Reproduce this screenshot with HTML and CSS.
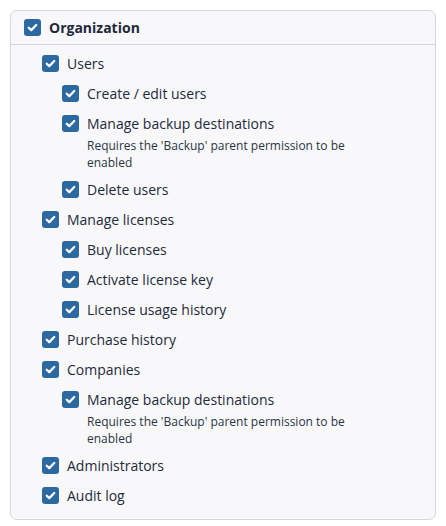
FILE: index.html
```html
<!DOCTYPE html>
<html>
<head>
<meta charset="utf-8">
<link rel="stylesheet" href="styles.css">
</head>
<body>
<div class="panel">
  <div class="header">
    <span class="cb"><svg viewBox="0 0 16 16"><path d="M4 8.2l2.7 2.6L12 5.4"/></svg></span>
    <span class="title">Organization</span>
  </div>
  <div class="list">
    <div class="row l1"><span class="cb"><svg viewBox="0 0 16 16"><path d="M4 8.2l2.7 2.6L12 5.4"/></svg></span><span>Users</span></div>
    <div class="row l2"><span class="cb"><svg viewBox="0 0 16 16"><path d="M4 8.2l2.7 2.6L12 5.4"/></svg></span><span>Create / edit users</span></div>
    <div class="row l2"><span class="cb"><svg viewBox="0 0 16 16"><path d="M4 8.2l2.7 2.6L12 5.4"/></svg></span><span>Manage backup destinations</span></div>
    <div class="note">Requires the 'Backup' parent permission to be enabled</div>
    <div class="row l2"><span class="cb"><svg viewBox="0 0 16 16"><path d="M4 8.2l2.7 2.6L12 5.4"/></svg></span><span>Delete users</span></div>
    <div class="row l1"><span class="cb"><svg viewBox="0 0 16 16"><path d="M4 8.2l2.7 2.6L12 5.4"/></svg></span><span>Manage licenses</span></div>
    <div class="row l2"><span class="cb"><svg viewBox="0 0 16 16"><path d="M4 8.2l2.7 2.6L12 5.4"/></svg></span><span>Buy licenses</span></div>
    <div class="row l2"><span class="cb"><svg viewBox="0 0 16 16"><path d="M4 8.2l2.7 2.6L12 5.4"/></svg></span><span>Activate license key</span></div>
    <div class="row l2"><span class="cb"><svg viewBox="0 0 16 16"><path d="M4 8.2l2.7 2.6L12 5.4"/></svg></span><span>License usage history</span></div>
    <div class="row l1"><span class="cb"><svg viewBox="0 0 16 16"><path d="M4 8.2l2.7 2.6L12 5.4"/></svg></span><span>Purchase history</span></div>
    <div class="row l1"><span class="cb"><svg viewBox="0 0 16 16"><path d="M4 8.2l2.7 2.6L12 5.4"/></svg></span><span>Companies</span></div>
    <div class="row l2"><span class="cb"><svg viewBox="0 0 16 16"><path d="M4 8.2l2.7 2.6L12 5.4"/></svg></span><span>Manage backup destinations</span></div>
    <div class="note">Requires the 'Backup' parent permission to be enabled</div>
    <div class="row l1"><span class="cb"><svg viewBox="0 0 16 16"><path d="M4 8.2l2.7 2.6L12 5.4"/></svg></span><span>Administrators</span></div>
    <div class="row l1"><span class="cb"><svg viewBox="0 0 16 16"><path d="M4 8.2l2.7 2.6L12 5.4"/></svg></span><span>Audit log</span></div>
  </div>
</div>
</body>
</html>
```
FILE: styles.css
```css
html, body {
  margin: 0;
  padding: 0;
  background: #ffffff;
}
body {
  padding: 10px;
  font-family: "Open Sans", "Noto Sans", sans-serif;
  color: #1e2a3b;
}
.panel {
  box-sizing: border-box;
  width: 426px;
  border: 1px solid #d5d6dc;
  border-radius: 7px;
  background: #f8f8fa;
}
.header {
  display: flex;
  align-items: center;
  height: 33px;
  padding-left: 13px;
  border-bottom: 1px solid #d5d6dc;
  gap: 8px;
}
.title {
  font-weight: 700;
  font-size: 14px;
}
.cb {
  width: 17px;
  height: 17px;
  border-radius: 3px;
  background: #2c69a0;
  display: inline-flex;
  align-items: center;
  justify-content: center;
  flex: none;
}
.cb svg {
  width: 15px;
  height: 15px;
  fill: none;
  stroke: #ffffff;
  stroke-width: 2.4;
  stroke-linecap: round;
  stroke-linejoin: round;
}
.list {
  padding: 3px 0 9px;
}
.row {
  display: flex;
  align-items: center;
  height: 30px;
  gap: 8px;
  font-size: 14px;
}
.l1 { padding-left: 31px; }
.l2 { padding-left: 51px; }
.note {
  padding-left: 76px;
  padding-right: 60px;
  font-size: 12px;
  line-height: 17px;
  margin-top: -1px;
  margin-bottom: 3px;
  color: #2a3444;
}
```
